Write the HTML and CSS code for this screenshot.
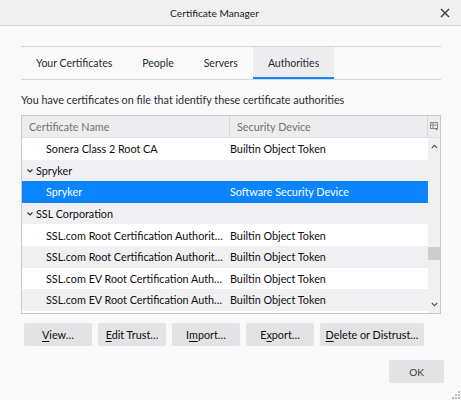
FILE: index.html
```html
<!DOCTYPE html>
<html>
<head>
<meta charset="utf-8">
<link rel="stylesheet" href="styles.css">
</head>
<body>
<div class="titlebar">
  <div class="title">Certificate Manager</div>
  <div class="close"><svg width="10" height="10" viewBox="0 0 10 10"><path d="M1 1L9 9M9 1L1 9" stroke="#3c3c3c" stroke-width="1.4" fill="none"/></svg></div>
</div>
<div class="content">
  <div class="tabs">
    <div class="tab">Your Certificates</div>
    <div class="tab">People</div>
    <div class="tab">Servers</div>
    <div class="tab active">Authorities</div>
  </div>
  <p class="desc">You have certificates on file that identify these certificate authorities</p>
  <div class="tree">
    <div class="thead">
      <div class="hcell c1">Certificate Name</div>
      <div class="hcell c2">Security Device</div>
      <div class="picker"><svg width="9" height="9" viewBox="0 0 9 9"><rect x="0.5" y="0.5" width="7" height="6" fill="none" stroke="#8a8a8a"/><path d="M0.5 3H7.5M3 0.5V6.5" stroke="#8a8a8a"/><path d="M5 6.5L6.5 8.5L8 6.5Z" fill="#6a6a6a"/></svg></div>
    </div>
    <div class="tbody">
      <div class="rows">
        <div class="row"><div class="cell c1 child">Sonera Class 2 Root CA</div><div class="cell c2">Builtin Object Token</div></div>
        <div class="row alt"><div class="cell c1 group"><svg class="twisty" width="6" height="4" viewBox="0 0 6 4"><path d="M0.5 0.5L3 3L5.5 0.5" stroke="#333" stroke-width="1.2" fill="none"/></svg>Spryker</div><div class="cell c2"></div></div>
        <div class="row sel"><div class="cell c1 child">Spryker</div><div class="cell c2">Software Security Device</div></div>
        <div class="row alt"><div class="cell c1 group"><svg class="twisty" width="6" height="4" viewBox="0 0 6 4"><path d="M0.5 0.5L3 3L5.5 0.5" stroke="#333" stroke-width="1.2" fill="none"/></svg>SSL Corporation</div><div class="cell c2"></div></div>
        <div class="row"><div class="cell c1 child">SSL.com Root Certification Authorit…</div><div class="cell c2">Builtin Object Token</div></div>
        <div class="row alt"><div class="cell c1 child">SSL.com Root Certification Authorit…</div><div class="cell c2">Builtin Object Token</div></div>
        <div class="row"><div class="cell c1 child">SSL.com EV Root Certification Auth…</div><div class="cell c2">Builtin Object Token</div></div>
        <div class="row alt"><div class="cell c1 child">SSL.com EV Root Certification Auth…</div><div class="cell c2">Builtin Object Token</div></div>
      </div>
      <div class="scrollbar">
        <div class="arrow"><svg width="7" height="5" viewBox="0 0 7 5"><path d="M0.8 4L3.5 1.3L6.2 4" stroke="#555" stroke-width="1.1" fill="none"/></svg></div>
        <div class="track"><div class="thumb"></div></div>
        <div class="arrow"><svg width="7" height="5" viewBox="0 0 7 5"><path d="M0.8 1L3.5 3.7L6.2 1" stroke="#555" stroke-width="1.1" fill="none"/></svg></div>
      </div>
    </div>
  </div>
  <div class="actions">
    <button class="btn"><u>V</u>iew…</button>
    <button class="btn"><u>E</u>dit Trust…</button>
    <button class="btn">I<u>m</u>port…</button>
    <button class="btn">E<u>x</u>port…</button>
    <button class="btn wide"><u>D</u>elete or Distrust…</button>
  </div>
  <div class="footer">
    <button class="btn ok">OK</button>
  </div>
</div>
<div class="grip"><svg width="8" height="8" viewBox="0 0 8 8"><g fill="#bbb"><rect x="6" y="0" width="2" height="2"/><rect x="3" y="3" width="2" height="2"/><rect x="6" y="3" width="2" height="2"/><rect x="0" y="6" width="2" height="2"/><rect x="3" y="6" width="2" height="2"/><rect x="6" y="6" width="2" height="2"/></g></svg></div>
</body>
</html>
```
FILE: styles.css
```css
html, body {
  margin: 0;
  padding: 0;
}
body {
  width: 461px;
  height: 400px;
  background: #f9f9fa;
  font-family: "Lato", "Noto Sans", sans-serif;
  font-size: 10.8px;
  color: #0c0c0d;
  position: relative;
  overflow: hidden;
}
.titlebar {
  height: 25px;
  background: #f0f0f0;
  border-bottom: 1px solid #d7d7d7;
  display: flex;
  align-items: center;
}
.title {
  flex: 1;
  text-align: center;
  color: #1a1a1a;
  font-size: 10.2px;
}
.close {
  width: 32px;
  display: flex;
  justify-content: center;
  align-items: center;
}
.content {
  padding: 20px 20px 0 21px;
}
.tabs {
  display: flex;
  border-top: 1px solid #d7d7db;
  border-bottom: 1px solid #d7d7db;
  height: 32px;
}
.tab {
  padding: 0 15px;
  display: flex;
  align-items: center;
  color: #2a2a2e;
  box-sizing: border-box;
  white-space: nowrap;
  font-size: 10.5px;
}
.tab.active {
  background: #ededf0;
  border-bottom: 2px solid #0a84ff;
  padding-top: 2px;
}
.desc {
  margin: 12px 0 7px 0;
  line-height: 16px;
  color: #2a2a2e;
  white-space: nowrap;
}
.tree {
  border: 1px solid #c8c8cc;
  background: #fff;
  width: 418px;
}
.thead {
  display: flex;
  height: 21px;
  background: #ededf0;
  border-bottom: 1px solid #e0e0e2;
  color: #737373;
}
.hcell {
  display: flex;
  align-items: center;
  box-sizing: border-box;
  padding-left: 7px;
  white-space: nowrap;
}
.hcell.c1 {
  width: 208px;
  border-right: 1px solid #d7d7db;
}
.hcell.c2 {
  flex: 1;
  border-right: 1px solid #d7d7db;
}
.picker {
  width: 12px;
  display: flex;
  align-items: center;
  justify-content: center;
}
.tbody {
  display: flex;
  height: 175px;
  overflow: hidden;
}
.rows {
  flex: 1;
  min-width: 0;
}
.row {
  display: flex;
  height: 21.6px;
  align-items: center;
  background: #fff;
}
.row.alt {
  background: #f0f0f2;
}
.row.sel {
  background: #0a84ff;
  color: #fff;
}
.cell {
  white-space: nowrap;
  overflow: hidden;
  text-overflow: ellipsis;
  box-sizing: border-box;
}
.cell.c1 {
  width: 208px;
  flex: none;
  padding-right: 4px;
}
.cell.c1.child {
  padding-left: 24px;
}
.cell.c1.group {
  padding-left: 5px;
  display: flex;
  align-items: center;
}
.twisty {
  margin-right: 3px;
  margin-top: 1px;
}
.cell.c2 {
  flex: 1;
  min-width: 0;
}
.scrollbar {
  width: 12px;
  flex: none;
  background: #f0f0f0;
  display: flex;
  flex-direction: column;
}
.arrow {
  height: 17px;
  display: flex;
  align-items: center;
  justify-content: center;
}
.track {
  flex: 1;
  position: relative;
}
.thumb {
  position: absolute;
  left: 0;
  right: 0;
  top: 92px;
  height: 13px;
  background: #cdcdcd;
}
.actions {
  display: flex;
  gap: 6px;
  padding-left: 3px;
  margin-top: 9px;
}
.btn {
  font-family: inherit;
  font-size: 10.8px;
  color: #0c0c0d;
  background: #e3e3e5;
  border: none;
  border-radius: 2px;
  height: 23px;
  width: 68px;
  padding: 0;
  margin: 0;
  white-space: nowrap;
}
.btn.wide {
  width: 104px;
}
.btn u {
  text-decoration-thickness: 1px;
  text-underline-offset: 2px;
}
.footer {
  display: flex;
  justify-content: flex-end;
  margin-top: 14px;
}
.btn.ok {
  width: 55px;
  margin-right: -3px;
  font-size: 10px;
  color: #333;
}
.grip {
  position: absolute;
  right: 1px;
  bottom: 1px;
  line-height: 0;
}
```
